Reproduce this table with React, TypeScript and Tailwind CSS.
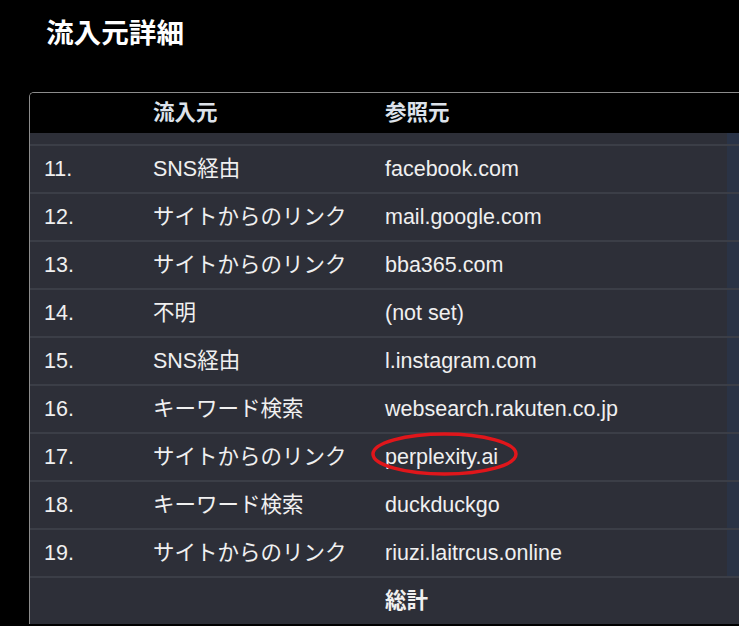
import React from "react";

const rows: [string, string, string][] = [
  ["11.", "SNS経由", "facebook.com"],
  ["12.", "サイトからのリンク", "mail.google.com"],
  ["13.", "サイトからのリンク", "bba365.com"],
  ["14.", "不明", "(not set)"],
  ["15.", "SNS経由", "l.instagram.com"],
  ["16.", "キーワード検索", "websearch.rakuten.co.jp"],
  ["17.", "サイトからのリンク", "perplexity.ai"],
  ["18.", "キーワード検索", "duckduckgo"],
  ["19.", "サイトからのリンク", "riuzi.laitrcus.online"],
];

const font = {
  fontFamily: '"Liberation Sans", Arial, "Noto Sans CJK JP", sans-serif',
};

export default function App() {
  return (
    <div
      className="w-[739px] h-[626px] overflow-hidden bg-black text-[#f0f0f0]"
      style={font}
    >
      <h1 className="pl-[46px] pt-[16px] h-[92px] text-[27.6px] font-bold leading-[36px] text-white">
        流入元詳細
      </h1>
      <div className="ml-[29px] w-[760px] border-l border-t border-[#8c8c8c] rounded-tl-[5px] overflow-hidden">
        {/* header */}
        <div className="grid grid-cols-[109px_232px_356px_1fr] h-[40px] items-center bg-black text-[21.5px] font-bold text-[#dde2ea]">
          <div className="px-[14px]"></div>
          <div className="px-[14px]">流入元</div>
          <div className="px-[14px]">参照元</div>
          <div></div>
        </div>
        {/* partial row */}
        <div className="grid grid-cols-[109px_232px_356px_1fr] h-[11px] bg-[#2d2f38]">
          <div></div>
          <div></div>
          <div></div>
          <div className="bg-[#293347]"></div>
        </div>
        {rows.map(([n, src, ref]) => (
          <div
            key={n}
            className="grid grid-cols-[109px_232px_356px_1fr] h-[48px] border-t-2 border-[#3b3e47] bg-[#2d2f38] text-[21.5px] items-stretch"
          >
            <div className="px-[14px] pt-[1px] flex items-center">{n}</div>
            <div className="px-[14px] pt-[1px] flex items-center whitespace-nowrap">{src}</div>
            <div className="px-[14px] pt-[1px] flex items-center whitespace-nowrap relative">
              {ref}
              {ref === "perplexity.ai" && (
                <svg
                  className="absolute left-0 top-[-6px] pointer-events-none"
                  width="150"
                  height="50"
                  viewBox="0 0 150 50"
                >
                  <ellipse
                    cx="73.5"
                    cy="26"
                    rx="71.5"
                    ry="20"
                    fill="none"
                    stroke="#e0161b"
                    strokeWidth="3.5"
                  />
                </svg>
              )}
            </div>
            <div className="bg-[#2a3345]"></div>
          </div>
        ))}
        <div className="grid grid-cols-[109px_232px_356px_1fr] h-[48px] border-t-2 border-[#3b3e47] bg-[#2d2f38] text-[21.5px] font-bold items-stretch">
          <div></div>
          <div></div>
          <div className="px-[14px] pt-[1px] flex items-center">総計</div>
          <div className="bg-[#2d2f38]"></div>
        </div>
      </div>
    </div>
  );
}
